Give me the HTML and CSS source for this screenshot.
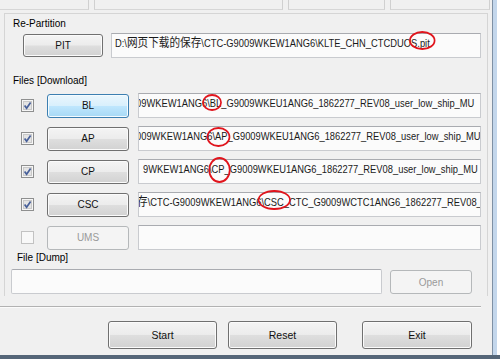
FILE: index.html
```html
<!DOCTYPE html>
<html>
<head>
<meta charset="utf-8">
<link rel="stylesheet" href="styles.css">
</head>
<body>
<div class="screen">
  <div class="main">
    <div class="topstrip">
      <div class="tcell c1"></div>
      <div class="tcell c2"></div>
      <div class="tcell c3"></div>
      <div class="tcell c4"></div>
    </div>
    <div class="frame">
      <div class="lbl lbl-re">Re-Partition</div>
      <div class="pitrow">
        <button class="btn pit">PIT</button>
        <div class="field pitfield"><span class="ftext">D:\<span class="cjk">网页下载的保存</span>\CTC-G9009WKEW1ANG6\KLTE_CHN_CTCDUO<span class="mark m-pit">S.pit</span></span></div>
      </div>

      <div class="lbl lbl-files">Files [Download]</div>
      <div class="rows">
        <div class="row">
          <svg class="chk" width="13" height="13" viewBox="0 0 13 13"><rect x="0.5" y="0.5" width="12" height="12" fill="#f6f6f6" stroke="#8e8f8f"/><rect x="2.5" y="2.5" width="8" height="8" fill="#e4e4e4" stroke="#c9c9c9"/><path d="M3.6 6.4 L5.6 9.2 L9.6 3.4" fill="none" stroke="#48609a" stroke-width="1.7"/></svg>
          <button class="btn fbtn hot">BL</button>
          <div class="field ffield"><span class="ftext off-bl">09WKEW1ANG6<span class="mark m-bl">\BL</span>_G9009WKEU1ANG6_1862277_REV08_user_low_ship_MU</span></div>
        </div>
        <div class="row">
          <svg class="chk" width="13" height="13" viewBox="0 0 13 13"><rect x="0.5" y="0.5" width="12" height="12" fill="#f6f6f6" stroke="#8e8f8f"/><rect x="2.5" y="2.5" width="8" height="8" fill="#e4e4e4" stroke="#c9c9c9"/><path d="M3.6 6.4 L5.6 9.2 L9.6 3.4" fill="none" stroke="#48609a" stroke-width="1.7"/></svg>
          <button class="btn fbtn">AP</button>
          <div class="field ffield"><span class="ftext off-ap">009WKEW1ANG6<span class="mark m-ap">\AP</span>_G9009WKEU1ANG6_1862277_REV08_user_low_ship_MU</span></div>
        </div>
        <div class="row">
          <svg class="chk" width="13" height="13" viewBox="0 0 13 13"><rect x="0.5" y="0.5" width="12" height="12" fill="#f6f6f6" stroke="#8e8f8f"/><rect x="2.5" y="2.5" width="8" height="8" fill="#e4e4e4" stroke="#c9c9c9"/><path d="M3.6 6.4 L5.6 9.2 L9.6 3.4" fill="none" stroke="#48609a" stroke-width="1.7"/></svg>
          <button class="btn fbtn">CP</button>
          <div class="field ffield"><span class="ftext off-cp">9WKEW1ANG6<span class="mark m-cp">\CP</span>_G9009WKEU1ANG6_1862277_REV08_user_low_ship_MU</span></div>
        </div>
        <div class="row">
          <svg class="chk" width="13" height="13" viewBox="0 0 13 13"><rect x="0.5" y="0.5" width="12" height="12" fill="#f6f6f6" stroke="#8e8f8f"/><rect x="2.5" y="2.5" width="8" height="8" fill="#e4e4e4" stroke="#c9c9c9"/><path d="M3.6 6.4 L5.6 9.2 L9.6 3.4" fill="none" stroke="#48609a" stroke-width="1.7"/></svg>
          <button class="btn fbtn">CSC</button>
          <div class="field ffield"><span class="ftext off-csc"><span class="cjk">存</span>\CTC-G9009WKEW1ANG6<span class="mark m-csc">\CSC</span>_CTC_G9009WCTC1ANG6_1862277_REV08_</span></div>
        </div>
        <div class="row">
          <svg class="chk" width="13" height="13" viewBox="0 0 13 13"><rect x="0.5" y="0.5" width="12" height="12" fill="#f8f8f8" stroke="#c2c2c2"/></svg>
          <button class="btn fbtn dis">UMS</button>
          <div class="field ffield"></div>
        </div>
      </div>

      <div class="lbl lbl-dump">File [Dump]</div>
      <div class="dumprow">
        <div class="field dumpfield"></div>
        <button class="btn dis open">Open</button>
      </div>
    </div>
    <div class="sep"></div>
    <div class="actions">
      <button class="btn act start">Start</button>
      <button class="btn act reset">Reset</button>
      <button class="btn act exit">Exit</button>
    </div>
  </div>
  <div class="rframe"></div>
</div>
<div class="bframe"></div>
</body>
</html>
```

FILE: styles.css
```css
* { box-sizing: border-box; }
html, body { margin: 0; padding: 0; }
body {
  width: 500px;
  height: 359px;
  overflow: hidden;
  background: #f0f0f0;
  font-family: "Liberation Sans", "Noto Sans CJK SC", sans-serif;
  font-size: 10px;
  color: #000;
}
.screen { display: flex; height: 355px; }
.main { width: 492px; display: flex; flex-direction: column; }
.rframe {
  width: 8px;
  border-left: 1px solid #7f91a5;
  background: linear-gradient(to right, #c4d7ec 0 4px, #ffffff 4px);
}
.bframe { height: 4px; background: #556678; }

.topstrip { height: 13px; display: flex; align-items: flex-start; }
.tcell { height: 10px; border-bottom: 1px solid #d6d6d6; }
.c1 { width: 89px; border-right: 1px solid #d0d0d0; }
.c2 { width: 189px; margin-left: 5px; border-left: 1px solid #d0d0d0; border-right: 1px solid #d0d0d0; }
.c3 { width: 97px; margin-left: 5px; border-left: 1px solid #d0d0d0; border-right: 1px solid #d0d0d0; }
.c4 { width: 100px; margin-left: 5px; border-left: 1px solid #d0d0d0; border-right: 1px solid #d0d0d0; }

.frame {
  margin-left: 4px;
  width: 484px;
  height: 283px;
  border: 1px solid #d5d5d5;
  border-bottom: none;
  padding-top: 3px;
}
.lbl { height: 13px; line-height: 13px; }
.lbl-re { margin-left: 8px; }
.lbl-files { margin-left: 8px; margin-top: 16px; }
.lbl-dump { margin-left: 12px; margin-top: 1px; }

.pitrow { display: flex; align-items: flex-start; margin-top: 3px; height: 25px; }
.btn {
  font-family: "Liberation Sans", sans-serif;
  font-size: 10px;
  color: #111;
  border: 1px solid #707070;
  border-radius: 3px;
  padding: 0;
  background: linear-gradient(#f4f4f4 0%, #ececec 48%, #dedede 52%, #d2d2d2 100%);
  box-shadow: inset 0 0 0 1px #fbfbfb;
}
.pit { margin-left: 18px; margin-top: 1px; width: 80px; height: 23px; }
.field {
  position: relative;
  height: 25px;
  border: 1px solid #c9cbcf;
  border-top-color: #a9abb0;
  background: #fbfbfb;
  overflow-x: clip;
  overflow-y: visible;
  white-space: nowrap;
  line-height: 19px;
  padding: 0 3px;
  color: #1a1a1a;
  font-family: "Liberation Sans", "Noto Sans CJK SC", sans-serif;
  font-size: 11px;
}
.ftext {
  display: inline-block;
  vertical-align: top;
  transform: scaleX(0.85);
  transform-origin: 0 50%;
}
.cjk {
  font-family: "Noto Sans CJK SC", sans-serif;
  font-size: 12.5px;
  line-height: 12px;
}
.pitfield { margin-left: 8px; width: 370px; }

.rows { display: flex; flex-direction: column; gap: 8px; margin-top: 6px; }
.row { display: flex; align-items: center; height: 25px; }
.chk { margin-left: 16px; flex: none; }
.fbtn { margin-left: 13px; width: 82px; height: 24px; }
.hot {
  border-color: #3c7fb1;
  background: linear-gradient(#eaf6fd 0%, #d9f0fc 48%, #bee6fd 52%, #a7d9f5 100%);
  box-shadow: inset 0 0 0 1px #f4fbff;
}
.dis {
  color: #9a9a9a;
  border-color: #b5b8ba;
  background: #f4f4f4;
  box-shadow: none;
}
.ffield { margin-left: 9px; width: 343px; padding: 0; }
.off-bl { margin-left: -3px; }
.off-ap { margin-left: -3px; }
.off-cp { margin-left: 4px; }
.off-csc { margin-left: -2px; }

.mark { position: relative; }
.mark::after {
  content: "";
  position: absolute;
  border-style: solid;
  border-color: #e0141c;
  border-width: 2px 2.4px;
  border-radius: 50%;
}
.m-pit::after { left: -2px; right: -7px; top: -6px; bottom: -1px; }
.m-bl::after { left: -6px; right: -1px; top: -3px; bottom: -2px; }
.m-ap::after { left: -7px; right: -3px; top: -3px; bottom: -5px; }
.m-cp::after { left: -1px; right: -7px; top: -6px; bottom: -8px; }
.m-csc::after { left: -4px; right: -8px; top: -6px; bottom: -2px; }

.dumprow { display: flex; align-items: flex-start; margin-top: 5px; }
.dumpfield { margin-left: 6px; width: 371px; border-radius: 2px; }
.open { margin-left: 8px; margin-top: 1px; width: 82px; height: 24px; }

.sep {
  margin-top: 10px;
  width: 481px;
  height: 2px;
  border-top: 1px solid #b2b2b2;
  border-bottom: 1px solid #fbfbfb;
}
.actions { display: flex; margin-top: 13px; }
.act { height: 28px; font-size: 10.5px; }
.start { margin-left: 108px; width: 109px; }
.reset { margin-left: 11px; width: 109px; }
.exit { margin-left: 25px; width: 110px; }
```
